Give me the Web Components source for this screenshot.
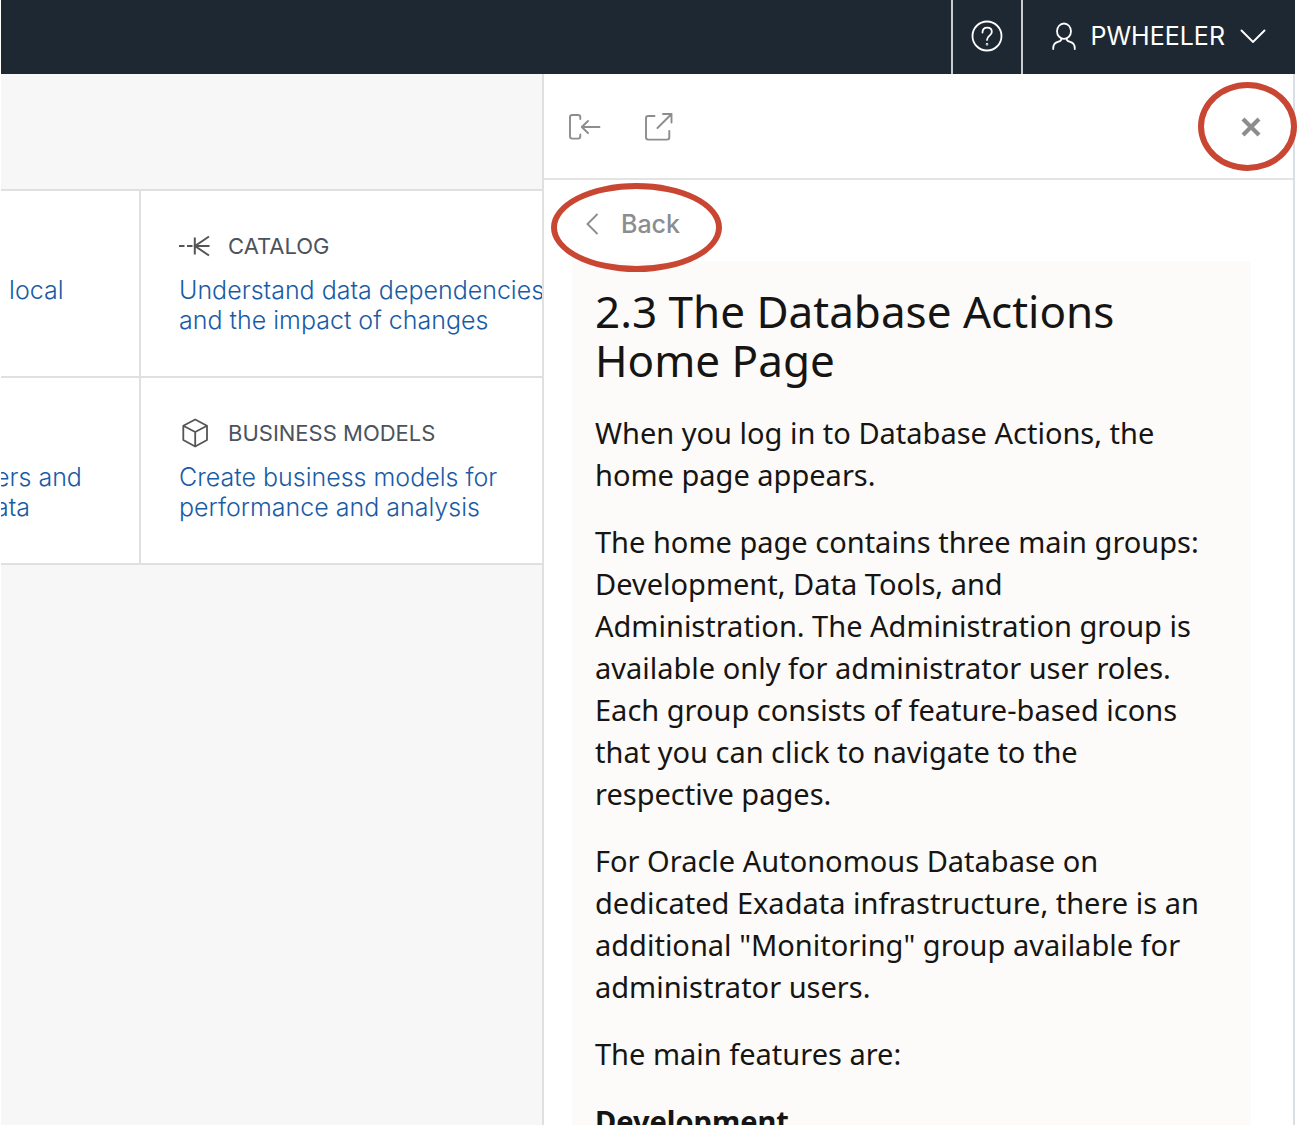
<!DOCTYPE html>
<html lang="en">
<head>
<meta charset="utf-8">
<meta name="viewport" content="width=device-width, initial-scale=1">
<title>Database Actions</title>
<style>
  html, body { margin: 0; height: 100%; background: #fff; overflow: hidden; }
  body { font-family: Inter, "Liberation Sans", sans-serif; font-size: 25px; }
</style>
</head>
<body>
<app-shell>
  <app-header slot="header" user="PWHEELER"></app-header>
  <card-grid slot="main">
    <tool-card class="cut"><span slot="text">  local</span></tool-card>
    <tool-card heading="CATALOG" icon="catalog"><span slot="text">Understand data dependencies<br>and the impact of changes</span></tool-card>
    <tool-card class="cut"><span slot="text">ers and<br>ata</span></tool-card>
    <tool-card heading="BUSINESS MODELS" icon="cube"><span slot="text">Create business models for<br>performance and analysis</span></tool-card>
  </card-grid>
  <help-drawer slot="drawer">
    <help-article>
      <h1>2.3 The Database Actions Home Page</h1>
      <p>When you log in to Database Actions, the home page appears.</p>
      <p>The home page contains three main groups: Development, Data Tools, and Administration. The Administration group is available only for administrator user roles. Each group consists of feature-based icons that you can click to navigate to the respective pages.</p>
      <p>For Oracle Autonomous Database on dedicated Exadata infrastructure, there is an additional "Monitoring" group available for administrator users.</p>
      <p>The main features are:</p>
      <p><b>Development</b></p>
    </help-article>
  </help-drawer>
</app-shell>

<script>
class BaseElement extends HTMLElement {
  render(html) {
    const t = document.createElement('template');
    t.innerHTML = html;
    this.attachShadow({ mode: 'open' }).append(t.content.cloneNode(true));
  }
}

const CONTROL = `button { appearance: none; background: none; border: 0; margin: 0; padding: 0; font: inherit; color: inherit; cursor: pointer; display: flex; align-items: center; }
  svg { display: block; fill: none; stroke: currentColor; flex: none; }`;

const ICONS = {
  catalog: '<svg width="32" height="30" viewBox="0 0 32 30" stroke-width="2"><path d="M0 15h5.500M8 15h5.500M15.800 6.500v17M16 15h14.500M30 5.500L16 15L30 24.500"/></svg>',
  cube: '<svg width="32" height="30" viewBox="0 0 32 30" stroke-width="1.800" stroke-linejoin="round"><path d="M16.200 1.500L28 7.700V22L16.200 28.500L4.300 22V7.700ZM4.300 7.700L16.200 14L28 7.700M16.200 14V28.500"/></svg>'
};

customElements.define('app-shell', class extends BaseElement {
  constructor() {
    super();
    this.render(`<style>
      :host { display: flex; flex-direction: column; height: 100vh; box-sizing: border-box; padding: 0 2px 0 1px; }
      .body { flex: 1; min-height: 0; display: flex; }
      main { flex: 1; min-width: 0; overflow: hidden; background: #f7f7f7; }
    </style>
    <slot name="header"></slot>
    <div class="body"><main><slot name="main"></slot></main><slot name="drawer"></slot></div>`);
  }
});

customElements.define('app-header', class extends BaseElement {
  constructor() {
    super();
    this.render(`<style>${CONTROL}
      :host { display: flex; justify-content: flex-end; height: 74px; flex: none; background: #1e2832; color: #fff; }
      button { border-left: 2px solid #c9ccd0; padding-bottom: 2px; }
      .help { width: 70px; justify-content: center; }
      .user { padding: 0 29px 2px; gap: 15px; }
    </style>
    <button class="help" aria-label="Help"><svg width="32" height="32" viewBox="0 0 32 32" stroke-width="1.800" stroke-linecap="round"><circle cx="16" cy="16" r="14.500"/><path d="M11.500 12.500c0-3 2-4.800 4.700-4.800s4.600 1.700 4.600 4.200c0 3.800-4.800 3.700-4.800 8"/><circle cx="16" cy="24.200" r=".4"/></svg></button>
    <button class="user"><svg width="24" height="28" viewBox="0 0 24 28" stroke-width="1.800" stroke-linecap="round"><ellipse cx="12" cy="9.200" rx="7" ry="7.700"/><path d="M9.500 16.500c0 2-1 2.600-3 3.200C3 20.800 1.200 22.100 1.200 27M14.500 16.500c0 2 1 2.600 3 3.200 3.500 1.100 5.300 2.400 5.300 7.300"/></svg><span></span><svg width="26" height="14" viewBox="0 0 26 14" stroke-width="1.900" stroke-linecap="round"><path d="M1.500 1.500L13 13L24.500 1.500"/></svg></button>`);
    this.shadowRoot.querySelector('span').textContent = this.getAttribute('user');
  }
});

customElements.define('card-grid', class extends BaseElement {
  constructor() {
    super();
    this.render(`<style>
      :host { display: grid; grid-template-columns: 138px minmax(402px, 1fr); gap: 2px; margin-top: 115px; padding: 2px 0; background: #e0e0e0; }
    </style><slot></slot>`);
  }
});

customElements.define('tool-card', class extends BaseElement {
  constructor() {
    super();
    const h = this.getAttribute('heading') || '';
    this.render(`<style>${CONTROL}
      :host { display: flex; flex-direction: column; gap: 14px; height: 145px; padding: 40px 0 0 38px; background: #fff; overflow: hidden; white-space: pre; line-height: 30px; }
      :host(.cut) { padding-left: 0; }
      :host(.cut) a { margin-left: -6px; }
      .title { display: flex; gap: 17px; height: 30px; color: #4b535c; font-size: 22px; }
      svg { color: #555; }
      a { color: #1a5ba6; text-decoration: none; font-weight: 300; font-size: 25px; }
    </style>
    <div class="title">${h ? ICONS[this.getAttribute('icon')] + '<span>' + h + '</span>' : ''}</div>
    <a href="#"><slot name="text"></slot></a>`);
  }
});

customElements.define('callout-ring', class extends BaseElement {
  constructor() {
    super();
    this.render(`<style>:host { display: block; position: absolute; box-sizing: border-box; border: 6px solid #c94633; border-radius: 50%; pointer-events: none; }</style>`);
  }
});

customElements.define('help-drawer', class extends BaseElement {
  constructor() {
    super();
    this.render(`<style>${CONTROL}
      :host { display: flex; flex-direction: column; flex: 0 0 753px; max-width: 100%; box-sizing: border-box; background: #fff; border-left: 2px solid #e0e0e0; border-right: 2px solid #d9dfe7; color: #8b8d8f; }
      .bar { position: relative; display: flex; align-items: center; gap: 44px; height: 102px; padding: 2px 32px 0 25px; border-bottom: 2px solid #e4e4e4; flex: none; }
      .close { margin-left: auto; }
      nav { position: relative; height: 81px; padding: 6px 41px 0; flex: none; display: flex; align-items: center; font-weight: 500; box-sizing: border-box; }
      nav button { gap: 22px; }
      .r1 { width: 99px; height: 89px; right: -4px; top: 8px; }
      .r2 { width: 171px; height: 89px; left: 7px; top: 3px; }
    </style>
    <div class="bar">
      <button aria-label="Dock"><svg width="32" height="28" viewBox="0 0 32 28" stroke-width="1.900" stroke-linecap="round" stroke-linejoin="round"><path d="M11.300 6V4.300Q11.300 2 9 2H3.300Q1 2 1 4.300V23.300Q1 25.600 3.300 25.600H9Q11.300 25.600 11.300 23.300V21.500M30.500 14H12.800M19 8L12.800 14L19 20"/></svg></button>
      <button aria-label="Open in new window"><svg width="28" height="28" viewBox="0 0 28 28" stroke-width="1.900" stroke-linecap="round" stroke-linejoin="round"><path d="M9.500 3H3.300Q1 3 1 5.300V24.300Q1 26.600 3.300 26.600H22Q24.300 26.600 24.300 24.300V18M12.500 15L26.500 1M18 1H26.500V9.500"/></svg></button>
      <button class="close" aria-label="Close"><svg width="20" height="20" viewBox="0 0 20 20" stroke-width="4.200"><path d="M2 2L18 18M18 2L2 18"/></svg></button>
      <callout-ring class="r1"></callout-ring>
    </div>
    <nav><button><svg width="14" height="22" viewBox="0 0 14 22" stroke-width="1.900"><path d="M12.500 1L2.500 11L12.500 21"/></svg><span>Back</span></button>
      <callout-ring class="r2"></callout-ring></nav>
    <slot></slot>`);
  }
});

customElements.define('help-article', class extends BaseElement {
  constructor() {
    super();
    this.render(`<style>
      :host { display: block; flex: 1; min-height: 0; overflow: hidden; margin: 0 42px 0 28px; padding: 26px 44px 0 23px; background: #fcfbf9; color: #161513; font-family: "Noto Sans", "Open Sans", sans-serif; font-size: 29px; line-height: 42px; }
      ::slotted(h1) { margin: 0 0 27px; font-size: 44px; line-height: 49px; font-weight: 400; }
      ::slotted(p) { margin: 0 0 25px; }
    </style><slot></slot>`);
  }
});
</script>
</body>
</html>
